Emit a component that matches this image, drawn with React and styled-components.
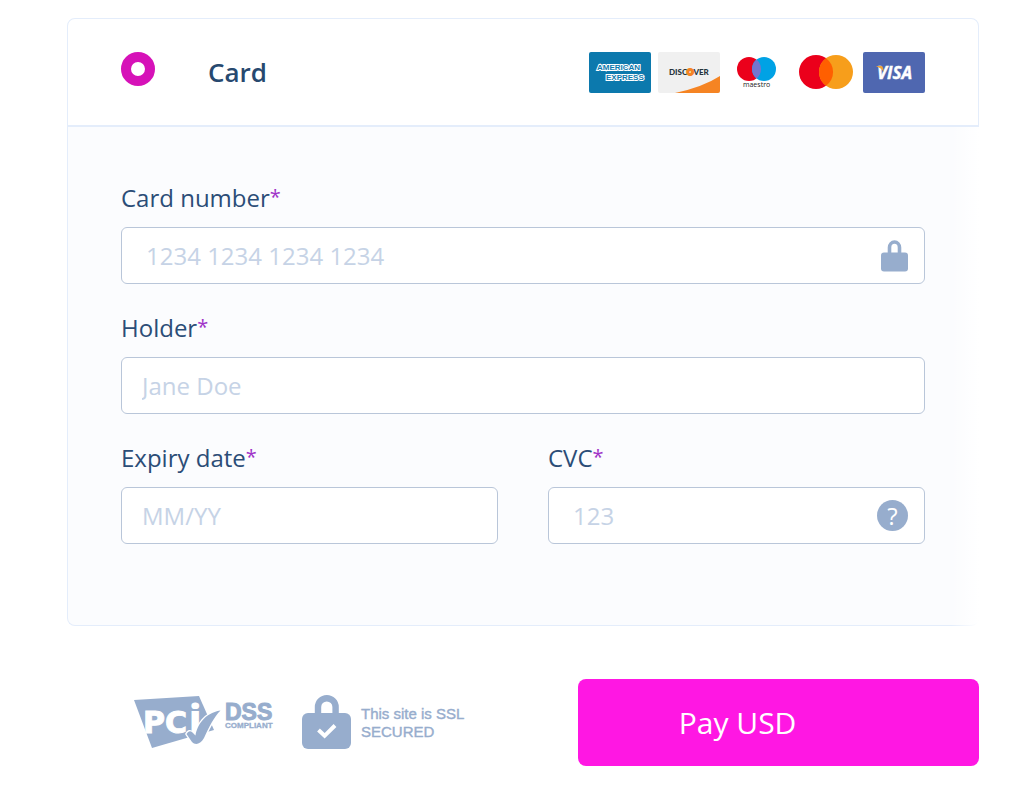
import React, { useState } from "react";
import styled, { createGlobalStyle } from "styled-components";

const GlobalStyle = createGlobalStyle`
  * {
    box-sizing: border-box;
  }
  body {
    margin: 0;
    background: #fff;
    font-family: "Open Sans", "Noto Sans", sans-serif;
    color: #2b4d77;
  }
  input, button {
    font-family: inherit;
  }
`;

const Page = styled.main`
  padding: 18px 45px 18px 67px;
`;

const Panel = styled.section`
  border-radius: 8px;
`;

const PanelHeader = styled.div`
  display: flex;
  align-items: flex-start;
  padding: 33px 53px 32px 53px;
  border: 1px solid #e4edfb;
  border-bottom-width: 2px;
  border-radius: 8px 8px 0 0;
`;

const Radio = styled.input`
  appearance: none;
  flex: none;
  width: 34px;
  height: 34px;
  margin: 0;
  border: 10px solid #d612b8;
  border-radius: 50%;
  background: #fff;
`;

const MethodName = styled.label`
  flex: 1;
  padding-left: 53px;
  font-size: 26px;
  font-weight: 600;
  line-height: 41px;
  color: #27496f;
`;

const Brands = styled.div`
  display: flex;
  justify-content: space-between;
  width: 336px;
`;

const Brand = styled.svg`
  display: block;
  width: 62px;
  height: 41px;
`;

const PanelBody = styled.div`
  position: relative;
  display: grid;
  grid-template-columns: 1fr 1fr;
  gap: 29px 50px;
  padding: 56px 54px 81px 53px;
  border: solid #e4edfb;
  border-width: 0 0 1px 1px;
  border-radius: 0 0 8px 8px;
  background: #fbfcfe;

  &::after {
    content: "";
    position: absolute;
    top: 0;
    right: 0;
    bottom: -1px;
    width: 28px;
    background: linear-gradient(to right, rgba(255, 255, 255, 0), #fff);
  }
`;

const FieldWrap = styled.div`
  grid-column: ${({ $wide }) => ($wide ? "1 / -1" : "auto")};
  min-width: 0;
`;

const Label = styled.label`
  display: block;
  margin-bottom: 14px;
  font-size: 24px;
  line-height: 30px;
`;

const Star = styled.span`
  font-size: 20px;
  line-height: 20px;
  vertical-align: 3px;
  color: #a033c8;
`;

const InputBox = styled.div`
  display: flex;
  align-items: center;
  height: 57px;
  padding-right: 16px;
  border: 1px solid #b9c6d9;
  border-radius: 6px;
  background: #fff;

  &:focus-within {
    border-color: #7d97bd;
  }
`;

const Input = styled.input`
  flex: 1;
  min-width: 0;
  height: 100%;
  padding: 0 0 0 ${({ $inset }) => ($inset ? 24 : 20)}px;
  border: 0;
  outline: 0;
  background: transparent;
  font-size: 24px;
  color: #2b4d77;

  &::placeholder {
    color: #c6d3e6;
    opacity: 1;
  }
`;

const LockSvg = styled.svg`
  flex: none;
  width: 27px;
  height: 32px;
`;

const HelpButton = styled.button`
  flex: none;
  width: 31px;
  height: 31px;
  padding: 0;
  border: 0;
  border-radius: 50%;
  background: #97adcd;
  color: #fff;
  font-size: 24px;
  line-height: 31px;
`;

const Footer = styled.footer`
  display: flex;
  align-items: center;
  margin-top: 53px;
`;

const Badges = styled.div`
  display: flex;
  flex: 1;
  align-items: center;
  padding-left: 67px;
`;

const PciSvg = styled.svg`
  flex: none;
  width: 140px;
  height: 55px;
  margin-right: 28px;
  overflow: visible;
`;

const SslSvg = styled.svg`
  flex: none;
  width: 49px;
  height: 55px;
  margin-right: 10px;
`;

const SslText = styled.p`
  margin: 0;
  font-family: "Liberation Sans", Arial, sans-serif;
  font-size: 15px;
  line-height: 18px;
  white-space: nowrap;
  color: #97adcd;
  -webkit-text-stroke: 0.4px #97adcd;
`;

const PayButton = styled.button`
  flex: 0 0 44%;
  height: 87px;
  padding: 0 0 0 101px;
  border: 0;
  border-radius: 8px;
  background: #ff17e3;
  color: #fff;
  font-size: 30px;
  text-align: left;
  cursor: pointer;
`;

const Amex = () => (
  <Brand viewBox="0 0 62 41" role="img" aria-label="American Express">
    <rect width="62" height="41" rx="2" fill="#0c79ad" />
    <g
      fontFamily="Liberation Sans, Arial, sans-serif"
      fontWeight="700"
      fill="#0c79ad"
      stroke="#fff"
      strokeWidth="2"
      paintOrder="stroke"
    >
      <text x="8" y="18" fontSize="8">AMERICAN</text>
      <text x="17" y="28" fontSize="8">EXPRESS</text>
    </g>
  </Brand>
);

const Discover = () => (
  <Brand viewBox="0 0 62 41" role="img" aria-label="Discover">
    <rect width="62" height="41" rx="2" fill="#f0f0f0" />
    <path d="M17 41 Q45 35 62 24 V39 Q62 41 60 41 Z" fill="#f58423" />
    <text x="11" y="23" fontFamily="Lato, sans-serif" fontWeight="900" fontSize="8" fill="#27343c">
      DISC<tspan fill="#f58423" stroke="#f58423" strokeWidth="2">O</tspan>VER
    </text>
  </Brand>
);

const Maestro = () => (
  <Brand viewBox="0 0 62 41" role="img" aria-label="Maestro">
    <circle cx="23" cy="17" r="12" fill="#eb001b" />
    <circle cx="38" cy="17" r="12" fill="#00a2e5" />
    <path d="M30.5 7.6 A12 12 0 0 1 30.5 26.4 A12 12 0 0 1 30.5 7.6 Z" fill="#7375cf" />
    <text x="17" y="35" fontFamily="Open Sans, sans-serif" fontWeight="500" fontSize="7" fill="#222">
      maestro
    </text>
  </Brand>
);

const Mastercard = () => (
  <Brand viewBox="0 0 62 41" role="img" aria-label="Mastercard">
    <circle cx="21" cy="20" r="17" fill="#eb001b" />
    <circle cx="41" cy="20" r="17" fill="#f79e1b" />
    <path d="M31 6.2 A17 17 0 0 1 31 33.8 A17 17 0 0 1 31 6.2 Z" fill="#ff5f00" />
  </Brand>
);

const Visa = () => (
  <Brand viewBox="0 0 62 41" role="img" aria-label="Visa">
    <rect width="62" height="41" rx="2" fill="#4f67b0" />
    <text
      x="14"
      y="27"
      fontFamily="Open Sans, sans-serif"
      fontWeight="700"
      fontStyle="italic"
      fontSize="17"
      fill="#fff"
      stroke="#fff"
      strokeWidth="0.4"
    >
      VISA
    </text>
    <path d="M13 14 H18 Q20 14 20 16 L21 20 Q18 16 13 14 Z" fill="#f0a63c" />
  </Brand>
);

const LockIcon = () => (
  <LockSvg viewBox="0 0 27 32" aria-hidden="true">
    <path d="M8.5 14 V7.5 A5 5.5 0 0 1 18.5 7.5 V14" fill="none" stroke="#97adcd" strokeWidth="3.6" />
    <rect x="0" y="12.5" width="27" height="19" rx="3" fill="#97adcd" />
  </LockSvg>
);

const PciBadge = () => (
  <PciSvg viewBox="0 0 140 55" role="img" aria-label="PCI DSS compliant">
    <path d="M0 5 L65 1 L80 35 L18 53 Z" fill="#97adcd" />
    <text
      x="9"
      y="38"
      fontFamily="DejaVu Sans, sans-serif"
      fontWeight="700"
      fontSize="30"
      fill="#fff"
      stroke="#fff"
      strokeWidth="1"
    >
      PC
    </text>
    <text x="55" y="38" fontFamily="Open Sans, sans-serif" fontWeight="800" fontSize="38" fill="#fff">
      i
    </text>
    <path
      d="M52.5 39 Q55 34.5 58.5 37.5 L61.5 40.5 C63 31 70 18 86.5 15.5 C80 22 75 32 70 43 C66 50 61 50 58 47 Z"
      fill="#97adcd"
      stroke="#fff"
      strokeWidth="2.6"
      strokeLinejoin="round"
      paintOrder="stroke"
    />
    <g fontFamily="Liberation Sans, Arial, sans-serif" fontWeight="700" fill="#97adcd" stroke="#97adcd">
      <text x="91" y="25" fontSize="23" strokeWidth="1">DSS</text>
      <text x="91" y="33" fontSize="8" strokeWidth="0.3">COMPLIANT</text>
    </g>
  </PciSvg>
);

const SslBadge = () => (
  <SslSvg viewBox="0 0 49 55" aria-hidden="true">
    <path d="M16 20 V12 A8.8 8.8 0 0 1 33.6 12 V20" fill="none" stroke="#97adcd" strokeWidth="6.4" />
    <rect y="18" width="49" height="36" rx="6" fill="#97adcd" />
    <path d="M16.5 35 L22.6 40.8 L33 30.5" fill="none" stroke="#fff" strokeWidth="4" />
  </SslSvg>
);

const Field = ({ id, label, wide, inset, icon, ...rest }) => {
  const [value, setValue] = useState("");
  return (
    <FieldWrap $wide={wide}>
      <Label htmlFor={id}>
        {label}
        <Star>*</Star>
      </Label>
      <InputBox>
        <Input
          id={id}
          required
          $inset={inset}
          value={value}
          onChange={(e) => setValue(e.target.value)}
          {...rest}
        />
        {icon}
      </InputBox>
    </FieldWrap>
  );
};

export default function App() {
  return (
    <>
      <GlobalStyle />
      <Page>
        <form onSubmit={(e) => e.preventDefault()}>
          <Panel>
            <PanelHeader>
              <Radio type="radio" id="method-card" name="method" defaultChecked />
              <MethodName htmlFor="method-card">Card</MethodName>
              <Brands>
                <Amex />
                <Discover />
                <Maestro />
                <Mastercard />
                <Visa />
              </Brands>
            </PanelHeader>
            <PanelBody>
              <Field
                id="number"
                label="Card number"
                placeholder="1234 1234 1234 1234"
                wide
                inset
                icon={<LockIcon />}
              />
              <Field id="holder" label="Holder" placeholder="Jane Doe" wide />
              <Field id="expiry" label="Expiry date" placeholder="MM/YY" />
              <Field
                id="cvc"
                label="CVC"
                placeholder="123"
                inset
                icon={<HelpButton type="button" aria-label="What is a CVC?">?</HelpButton>}
              />
            </PanelBody>
          </Panel>
          <Footer>
            <Badges>
              <PciBadge />
              <SslBadge />
              <SslText>
                This site is SSL
                <br />
                SECURED
              </SslText>
            </Badges>
            <PayButton type="submit">Pay USD</PayButton>
          </Footer>
        </form>
      </Page>
    </>
  );
}
